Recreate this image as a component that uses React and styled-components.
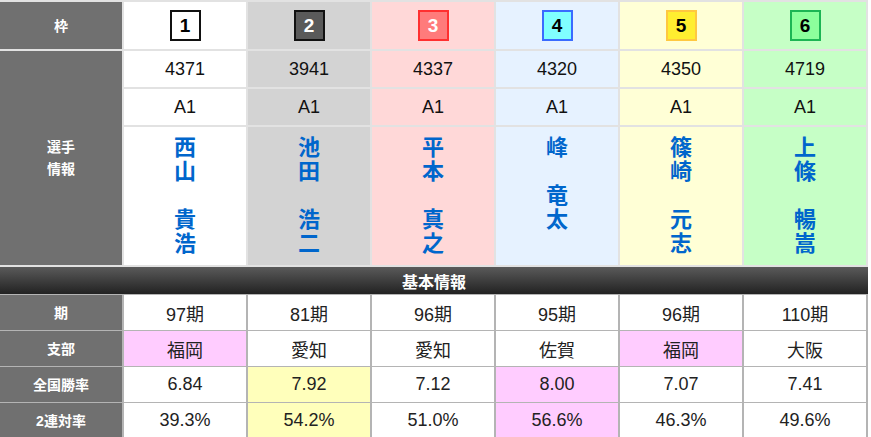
import React from 'react';
import styled, {createGlobalStyle} from 'styled-components';

const GlobalStyle = createGlobalStyle`
  body {
    margin: 0;
    background: #fff;
    font-family: "Liberation Sans", "Noto Sans CJK JP", sans-serif;
  }
`;

const lanes = [
  {bg: '#ffffff', box: '#ffffff', border: '#111', color: '#000'},
  {bg: '#d3d3d3', box: '#5a5a5a', border: '#111', color: '#fff'},
  {bg: '#ffd8d8', box: '#ff7b7b', border: '#ff3030', color: '#fff'},
  {bg: '#e6f2ff', box: '#80ffff', border: '#3a6bff', color: '#000'},
  {bg: '#ffffd6', box: '#ffee30', border: '#ffc840', color: '#000'},
  {bg: '#c6ffc6', box: '#8cff9c', border: '#1cb554', color: '#000'},
];

const racers = [
  {id: '4371', cls: 'A1', name: '西山　貴浩', term: '97期', branch: '福岡', rate: '6.84', quin: '39.3%'},
  {id: '3941', cls: 'A1', name: '池田　浩二', term: '81期', branch: '愛知', rate: '7.92', quin: '54.2%'},
  {id: '4337', cls: 'A1', name: '平本　真之', term: '96期', branch: '愛知', rate: '7.12', quin: '51.0%'},
  {id: '4320', cls: 'A1', name: '峰　竜太', term: '95期', branch: '佐賀', rate: '8.00', quin: '56.6%'},
  {id: '4350', cls: 'A1', name: '篠崎　元志', term: '96期', branch: '福岡', rate: '7.07', quin: '46.3%'},
  {id: '4719', cls: 'A1', name: '上條　暢嵩', term: '110期', branch: '大阪', rate: '7.41', quin: '49.6%'},
];

// highlighted cells in the stats table
const marks = {
  branch: {0: '#ffccff', 4: '#ffccff'},
  rate: {1: '#ffffbb', 3: '#ffccff'},
  quin: {1: '#ffffbb', 3: '#ffccff'},
};

const TopGrid = styled.div`
  display: grid;
  grid-template-columns: repeat(7, 122px);
  grid-template-rows: 47px 36px 36px 138px;
  gap: 2px;
  padding: 2px 2px 2px 0;
  width: max-content;
  background: #e2e2e2;
`;

const Label = styled.div`
  background: #707070;
  color: #fff;
  font-weight: bold;
  font-size: 14px;
  line-height: 22px;
  display: flex;
  align-items: center;
  justify-content: center;
  text-align: center;
  grid-row: ${p => p.$span ? `span ${p.$span}` : 'auto'};
`;

const LaneCell = styled.div`
  background: ${p => p.$bg};
  color: #111;
  font-size: 18px;
  display: flex;
  align-items: center;
  justify-content: center;
`;

const NumBox = styled.div`
  width: 27px;
  height: 27px;
  border: 2px solid ${p => p.$border};
  background: ${p => p.$box};
  color: ${p => p.$color};
  font-size: 19px;
  font-weight: bold;
  display: flex;
  align-items: center;
  justify-content: center;
`;

const NameCell = styled.div`
  background: ${p => p.$bg};
  display: flex;
  justify-content: center;
  align-items: flex-start;
  padding-top: 9px;
`;

const NameText = styled.span`
  writing-mode: vertical-rl;
  text-orientation: upright;
  letter-spacing: 2px;
  line-height: 1;
  color: #0066cc;
  font-weight: bold;
  font-size: 22px;
  font-family: "Noto Sans CJK JP", sans-serif;
`;

const Bar = styled.div`
  width: 868px;
  height: 27px;
  background: linear-gradient(#5a5a5a, #222);
  color: #fff;
  font-weight: bold;
  font-size: 16px;
  display: flex;
  align-items: center;
  justify-content: center;
`;

const StatGrid = styled.div`
  display: grid;
  grid-template-columns: repeat(7, 122px);
  grid-auto-rows: 35px;
  column-gap: 2px;
  row-gap: 1px;
  padding: 1px 2px 1px 0;
  width: max-content;
  background: #b4b4b4;
`;

const StatCell = styled.div`
  background: ${p => p.$bg || '#fff'};
  color: #222;
  font-size: 18px;
  display: flex;
  align-items: center;
  justify-content: center;
`;

const statRows = [
  {key: 'term', label: '期'},
  {key: 'branch', label: '支部'},
  {key: 'rate', label: '全国勝率'},
  {key: 'quin', label: '2連対率'},
];

export default function App() {
  return (
    <>
      <GlobalStyle />
      <TopGrid>
        <Label>枠</Label>
        {lanes.map((l, i) => (
          <LaneCell key={i} $bg={l.bg}>
            <NumBox $box={l.box} $border={l.border} $color={l.color}>{i + 1}</NumBox>
          </LaneCell>
        ))}
        <Label $span={3}>選手<br />情報</Label>
        {racers.map((r, i) => <LaneCell key={i} $bg={lanes[i].bg}>{r.id}</LaneCell>)}
        {racers.map((r, i) => <LaneCell key={i} $bg={lanes[i].bg}>{r.cls}</LaneCell>)}
        {racers.map((r, i) => (
          <NameCell key={i} $bg={lanes[i].bg}>
            <NameText>{r.name}</NameText>
          </NameCell>
        ))}
      </TopGrid>
      <Bar>基本情報</Bar>
      <StatGrid>
        {statRows.map(row => (
          <React.Fragment key={row.key}>
            <Label>{row.label}</Label>
            {racers.map((r, i) => (
              <StatCell key={i} $bg={marks[row.key] && marks[row.key][i]}>{r[row.key]}</StatCell>
            ))}
          </React.Fragment>
        ))}
      </StatGrid>
    </>
  );
}
